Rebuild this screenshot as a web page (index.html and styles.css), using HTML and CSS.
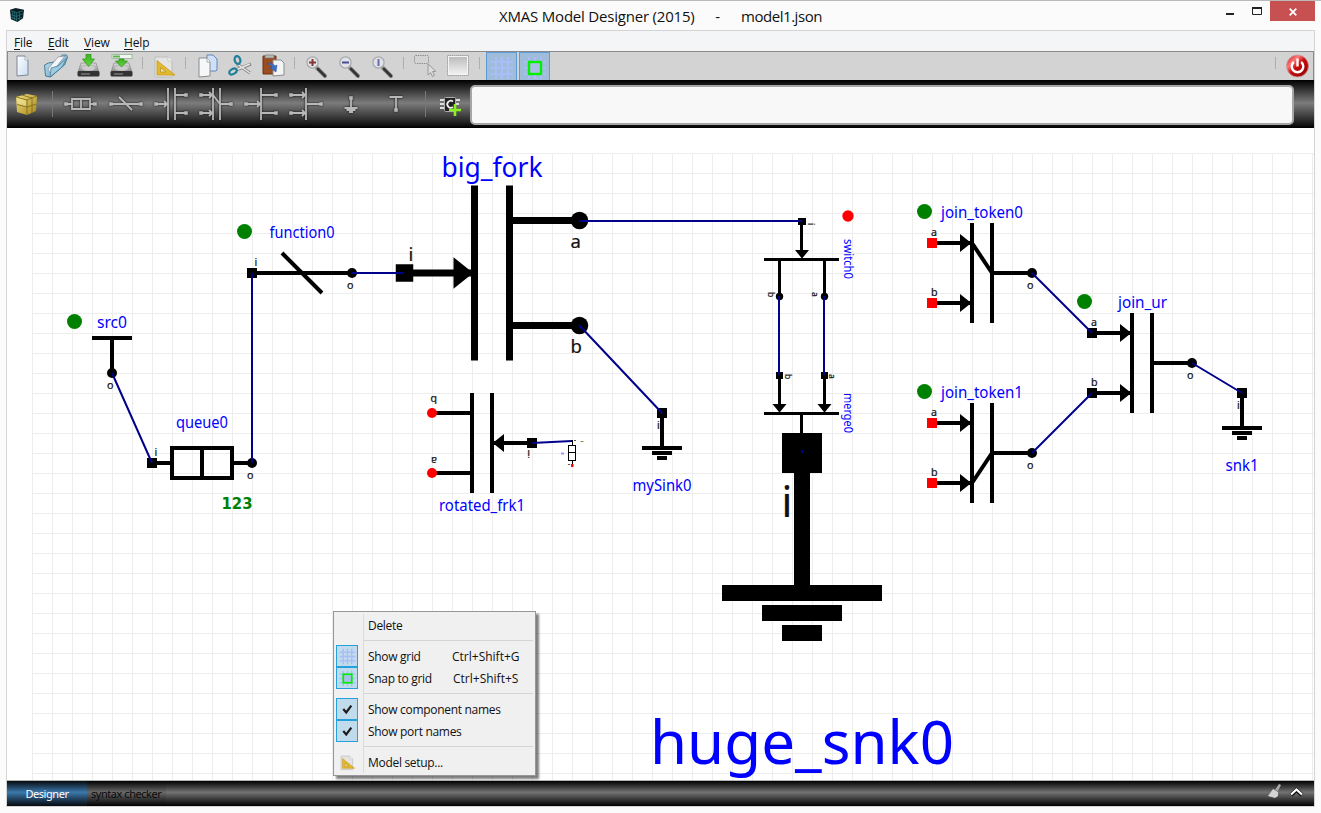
FILE: index.html
```html
<!DOCTYPE html>
<html lang="en">
<head>
<meta charset="utf-8">
<title>XMAS Model Designer (2015) - model1.json</title>
<link rel="stylesheet" href="styles.css">
</head>
<body>
<svg class="defs" width="0" height="0" aria-hidden="true">
  <defs>
    <linearGradient id="page" x1="0" y1="0" x2="1" y2="1"><stop offset="0" stop-color="#fff"/><stop offset="1" stop-color="#c9dcf3"/></linearGradient>
    <linearGradient id="folder" x1="0" y1="0" x2="1" y2="1"><stop offset="0" stop-color="#c8e4f0"/><stop offset="1" stop-color="#5f9fbe"/></linearGradient>
    <linearGradient id="disk" x1="0" y1="0" x2="0" y2="1"><stop offset="0" stop-color="#ddd"/><stop offset="1" stop-color="#888"/></linearGradient>
    <linearGradient id="arrowg" x1="0" y1="0" x2="0" y2="1"><stop offset="0" stop-color="#3cb521"/><stop offset="1" stop-color="#5ed63a"/></linearGradient>
    <linearGradient id="gold" x1="0" y1="0" x2="1" y2="1"><stop offset="0" stop-color="#f0e080"/><stop offset="1" stop-color="#a5851a"/></linearGradient>
    <linearGradient id="fade" x1="0" y1="0" x2="0" y2="1"><stop offset="0" stop-color="#bbb"/><stop offset="1" stop-color="#f2f2f2"/></linearGradient>
    <linearGradient id="red" x1="0" y1="0" x2="1" y2="1"><stop offset="0" stop-color="#b81010"/><stop offset=".3" stop-color="#ff7a7a"/><stop offset=".5" stop-color="#c80c0c"/><stop offset=".8" stop-color="#a00606"/><stop offset="1" stop-color="#f05050"/></linearGradient>
    <symbol id="setup" viewBox="0 0 25 25">
      <path d="M3 3h13l4 4v16H3z" fill="#e4e4e2" stroke="#bdbdbd"/><path d="M16 3v4h4" fill="#fff" stroke="#c6c6c6"/>
      <path d="M5 6.500v14.500h18z" fill="#e3b92f" stroke="#c79a1f" stroke-width=".8"/><path d="M8.500 13.500v4.500h5.500z" fill="#e9e4cf" stroke="#b98f1d" stroke-width=".8"/>
    </symbol>
    <symbol id="grid" viewBox="0 0 24 24"><path d="M6 1v22M12 1v22M18 1v22M1 6h22M1 12h22M1 18h22" stroke="#a9bdf6" stroke-width="2"/></symbol>
    <symbol id="snap" viewBox="0 0 24 24"><use href="#grid"/><rect x="6" y="6" width="12" height="12" fill="#a9bfe8" stroke="#00f000" stroke-width="2.400"/></symbol>
    <symbol id="lens" viewBox="0 0 25 25"><path d="M13 14l8 8" stroke="#8e8e8e" stroke-width="4" stroke-linecap="round"/><path d="M14 15l7 7" stroke="#353535" stroke-width="2.600" stroke-linecap="round"/><circle cx="8.500" cy="8.500" r="5.600" fill="#dfe2e6" stroke="#a9a9a9" stroke-width="1.300"/></symbol>
    <symbol id="check" viewBox="0 0 20 20"><path d="M5 9.500l3.500 4 6-8" fill="none" stroke="#1c1c1c" stroke-width="2.600"/></symbol>
    <g id="arrow"><path d="M-10-9L0-1V1L-10 9z"/></g>
    <g id="join-base"><path class="ln" d="M-10-50V50M10-50V50M10 0H50M-50-30H-12M-50 30H-12"/><use href="#arrow" x="-12" y="-30"/><use href="#arrow" x="-12" y="30"/><circle cx="50" r="5"/></g>
    <g id="fork-base"><path class="ln" d="M-10-50V50M10-50V50M-50 0H-12M10-30H50M10 30H50"/><use href="#arrow" x="-12"/><path d="M-55-5h10v10h-10z"/></g>
    <g id="sink"><path class="ln" d="M0-20V15M-20 15H20M-10 20H10M-5 25H5"/><path d="M-5-25h10v10h-10z"/></g>
  </defs>
</svg>

<header class="titlebar">
  <svg class="app-icon" viewBox="0 0 15 15"><path d="M0 2L6 0l9 2-1 9-6 4-7-3z" fill="#0b2025"/><path d="M1 3l6 2 7-2M7 5v9M1 7l6 2 7-3M3 3v9M5 4v9M10 4v9M1 10l6 2 6-2" stroke="#2b7c86" stroke-width=".7" fill="none"/></svg>
  <h1 class="title"><span class="t-app">XMAS Model Designer (2015)</span><span>-</span><span class="t-doc">model1.json</span></h1>
  <div class="winbtns">
    <svg class="minmax" viewBox="0 0 45 20"><path d="M1 13h8" stroke="#222" stroke-width="2"/><path d="M27.500 7.500h9v6h-9z" fill="none" stroke="#222" stroke-width="1"/><path d="M27 7h10" stroke="#222" stroke-width="2"/></svg>
    <div class="close"><svg viewBox="0 0 8 8"><path d="M.7.7l6.600 6.600M7.300.7L.7 7.300" stroke="#fff" stroke-width="1.700"/></svg></div>
  </div>
</header>

<main class="window">
  <nav class="menubar"><span class="m-file"><u>F</u>ile</span><span class="m-edit"><u>E</u>dit</span><span class="m-view"><u>V</u>iew</span><span><u>H</u>elp</span></nav>

  <div class="toolbar">
    <div class="tools">
      <span class="slot"><svg viewBox="0 0 25 25"><path d="M7 2h8l3 4v15l-11 1z" fill="url(#page)" stroke="#7d8795"/><path d="M15 2v4h3" fill="#fff" stroke="#98a1ad" stroke-width=".8"/></svg></span>
      <span class="slot"><svg viewBox="0 0 25 25"><path d="M1.500 11l4-2 6-1 8-7 4 0 1 2-3 8-14 12-5-1z" fill="url(#folder)" stroke="#477d99"/><path d="M5 15L15 3l7-1-8 10-7 7z" fill="#f4f7f9" stroke="#889" stroke-width=".7"/><path d="M8 14l7-2 9-8-5 9-12 10z" fill="#9ccce2" stroke="#48809d" stroke-width=".8"/></svg></span>
      <span class="slot"><svg viewBox="0 0 25 25"><path d="M5 9h15l3 9H2z" fill="url(#disk)" stroke="#888" stroke-width=".7"/><ellipse cx="12.500" cy="14" rx="7" ry="3" fill="#ccc" stroke="#aaa" stroke-width=".6"/><rect x="1.500" y="17" width="22" height="5.500" rx="1.500" fill="#333"/><path d="M5 20h9" stroke="#777" stroke-width="1.500"/><path d="M10 0h5v5h3.500l-6 7.500L6.500 5h3.500z" fill="url(#arrowg)" stroke="#31901d" stroke-width=".7"/></svg></span>
      <span class="slot"><svg viewBox="0 0 25 25"><path d="M5 9h15l3 9H2z" fill="url(#disk)" stroke="#888" stroke-width=".7"/><ellipse cx="12.500" cy="14" rx="7" ry="3" fill="#ccc" stroke="#aaa" stroke-width=".6"/><rect x="1.500" y="17" width="22" height="5.500" rx="1.500" fill="#333"/><path d="M5 20h9" stroke="#777" stroke-width="1.500"/><rect x="3" y=".5" width="20" height="4" fill="#f4f4f4" stroke="#8bb98b" stroke-width=".8"/><path d="M4 2.500h7" stroke="#5fb14c" stroke-width="2"/><path d="M10 5h5v2h3.500l-6 6L6.500 7h3.500z" fill="url(#arrowg)" stroke="#31901d" stroke-width=".7"/></svg></span>
      <i class="sep"></i>
      <span class="slot"><svg viewBox="0 0 25 25"><use href="#setup"/></svg></span>
      <i class="sep"></i>
      <span class="slot"><svg viewBox="0 0 25 25"><path d="M12 1h6l4 4v11l-1 1h-9z" fill="#cfe0f6" stroke="#5e86bd"/><path d="M4 4h8l3 4v14l-11 1z" fill="#f5f7f9" stroke="#8b8b8b"/><path d="M12 4v4h3" fill="#fff" stroke="#999" stroke-width=".8"/></svg></span>
      <span class="slot"><svg viewBox="0 0 25 25"><path d="M9 10l13 9M8 16L23 10" stroke="#888" stroke-width="3"/><path d="M9 10l13 9M9 15.500l13-5.500" stroke="#e6e6e6" stroke-width="1.500"/><ellipse cx="9.500" cy="6" rx="2.800" ry="4" fill="none" stroke="#1f7f99" stroke-width="2.200" transform="rotate(-15 9.500 6)"/><ellipse cx="5" cy="17.500" rx="2.500" ry="4" fill="none" stroke="#1f7f99" stroke-width="2.200" transform="rotate(60 5 17.500)"/></svg></span>
      <span class="slot"><svg viewBox="0 0 25 25"><path d="M2 2h13v18H2z" fill="#9a4d20" stroke="#6c330f"/><path d="M4 1h9v3H4z" fill="#bbb" stroke="#777" stroke-width=".7"/><path d="M12 6h8l3 3v12l-11 1z" fill="#f2f4f6" stroke="#8b8b8b"/><path d="M6 10c3-2 7 0 8 2l2-1-1 7-6-4 2-1c-1-2-3-3-5-3z" fill="#3d6fc4" stroke="#2b4f94" stroke-width=".5"/></svg></span>
      <i class="sep"></i>
      <span class="slot"><svg viewBox="0 0 25 25"><use href="#lens"/><path d="M5 8.500h7M8.500 5v7" stroke="#8a3434" stroke-width="2"/></svg></span>
      <span class="slot"><svg viewBox="0 0 25 25"><use href="#lens"/><path d="M5 8.500h7" stroke="#4b4b93" stroke-width="2"/></svg></span>
      <span class="slot"><svg viewBox="0 0 25 25"><use href="#lens"/><path d="M8.500 5v7" stroke="#6c6ca8" stroke-width="2"/></svg></span>
      <i class="sep"></i>
      <span class="slot"><svg viewBox="0 0 25 25"><rect x="1.500" y="1.500" width="14" height="8" rx="1" fill="none" stroke="#8f8f8f" stroke-dasharray="1.500 .8"/><path d="M15 10v11l2.500-2.500 2 4 2-1-2-4h3.500z" fill="#ddd" stroke="#999"/></svg></span>
      <span class="slot"><svg viewBox="0 0 25 25"><rect x="2.500" y="2.500" width="19" height="18" fill="url(#fade)" stroke="#f4f4f4"/><rect x="1.500" y="1.500" width="21" height="20" fill="none" stroke="#a2a2a2" stroke-dasharray="1.500 .6"/></svg></span>
      <i class="sep"></i>
      <span class="slot toggle"><svg viewBox="0 0 24 24"><use href="#grid"/></svg></span>
      <span class="slot toggle second"><svg viewBox="0 0 24 24"><use href="#snap"/></svg></span>
    </div>
    <div class="tools right"><i class="sep"></i><span class="slot"><svg viewBox="0 0 25 25"><circle cx="12.500" cy="12" r="11" fill="url(#red)" stroke="#c99" stroke-width=".8"/><path d="M8.800 8a5.800 5.800 0 1 0 7.400 0M12.500 4.500v8" fill="none" stroke="#fff" stroke-width="2.400"/></svg></span></div>
  </div>

  <div class="compbar">
    <span class="group"><svg viewBox="0 0 40 48"><path d="M9 17l11-3 10 2-1 15-9 4-10-3z" fill="url(#gold)"/><path d="M9 17l11 3 10-4M20 20v15M10 24.500l10 2.500 9.500-3M15 15l10 3v15" stroke="#7d6516" stroke-width=".8" fill="none"/><path d="M10 18l9 2.500v5.500L10.500 23.500z" fill="#f6ebac" opacity=".5"/></svg></span>
    <i class="dsep d1"></i>
    <svg class="comp" viewBox="0 0 45 48"><path d="M8 24h6M32 24h5M14 19h18v10H14zM23 19v10"/><path class="pt" d="M8 24h0M37 24h0"/></svg>
    <svg class="comp" viewBox="0 0 45 48"><path d="M8 24h30M16 17l13 13"/><path class="pt" d="M8 24h0M38 24h0"/></svg>
    <svg class="comp" viewBox="0 0 45 48"><path d="M20 8v32M27 8v32M8 24h10M16 21l3 3-3 3M27 15h11M27 33h11"/><path class="pt" d="M8 24h0M38 15h0M38 33h0"/></svg>
    <svg class="comp" viewBox="0 0 45 48"><path d="M20 8v32M27 8v32M8 15h10M8 33h10M16 12l3 3-3 3M16 30l3 3-3 3M20 15l7 9h11"/><path class="pt" d="M8 15h0M8 33h0M38 24h0"/></svg>
    <svg class="comp" viewBox="0 0 45 48"><path d="M23 8v32M8 24h13M19 21l3 3-3 3M23 15h15M23 33h15"/><path class="pt" d="M8 24h0M38 15h0M38 33h0"/></svg>
    <svg class="comp" viewBox="0 0 45 48"><path d="M23 8v32M8 15h13M8 33h13M19 12l3 3-3 3M19 30l3 3-3 3M23 24h15"/><path class="pt" d="M8 15h0M8 33h0M38 24h0"/></svg>
    <svg class="comp" viewBox="0 0 45 48"><path d="M23 18v10M16.500 28h13M18.500 30h9M21 32h4"/><path class="pt" d="M23 18h0"/></svg>
    <svg class="comp" viewBox="0 0 45 48"><path d="M16.500 17h13M23 17v13"/><path class="pt" d="M23 30h0"/></svg>
    <i class="dsep d2"></i>
    <span class="chip"><svg viewBox="0 0 37 48"><rect x="11.500" y="17.500" width="11" height="14" rx="1" fill="#222" stroke="#aaa"/><path d="M7 20h4M7 24h4M7 28h4M23 20h4M23 24h3" stroke="#ddd" stroke-width="2"/><path d="M20 21.500a3.500 3.500 0 1 0 0 5.500" fill="none" stroke="#eee" stroke-width="1.800"/><path d="M16 30h12M22 24v12" stroke="#8df020" stroke-width="2.600"/></svg></span>
    <div class="field"></div>
  </div>

  <section class="canvas">
    <svg class="diagram" viewBox="7 128 1307 652">
      <defs><pattern id="gridlines" x="32" y="153" width="20" height="20" patternUnits="userSpaceOnUse"><path d="M0 .5H20M.5 0V20" stroke="#ededed"/></pattern></defs>
      <rect x="32" y="153" width="1282" height="627" fill="url(#gridlines)"/>

      <g class="ok"><circle cx="74.500" cy="321.500" r="7.500"/><circle cx="244.500" cy="231.500" r="7.500"/><circle cx="924.500" cy="211.500" r="7.500"/><circle cx="1084.500" cy="301.500" r="7.500"/><circle cx="924.500" cy="391.500" r="7.500"/></g>
      <circle class="bad" cx="848" cy="216" r="5.700"/>

      <path class="ln" d="M92 338h40M112 338v35"/><circle cx="112" cy="373" r="5"/>
      <path class="ln" d="M152 463h20M232 463h20M172 448h60v30h-60zM202 448v30"/><path d="M147 458h10v10h-10z"/><circle cx="252" cy="463" r="5"/>
      <path class="ln" d="M252 273h100M282 253l40 40"/><path d="M247 268h10v10h-10z"/><circle cx="352" cy="273" r="5"/>

      <g transform="translate(492 273) scale(1.75)"><use href="#fork-base"/><circle cx="50" cy="-30" r="5"/><circle cx="50" cy="30" r="5"/></g>
      <g transform="translate(482 443) rotate(180)"><use href="#fork-base"/><circle class="bad" cx="50" cy="-30" r="5"/><circle class="bad" cx="50" cy="30" r="5"/></g>
      <g transform="translate(662 433)"><use href="#sink"/></g>
      <g transform="translate(1242 413)"><use href="#sink"/></g>
      <g transform="translate(802 533) scale(4)"><use href="#sink"/></g>

      <g class="thin"><path d="M801.500 222v34M764 259.500h75M779.500 260v36M824.500 260v36M779.500 376v30M824.500 376v30M764 413.500h75M801.500 413v21"/></g>
      <path d="M798 218h8v7h-8zM795 250h14l-6.500 8h-1zM776 372h7v7h-7zM821 372h7v7h-7zM772.500 404h14l-6.500 8h-1zM817.500 404h14l-6.500 8h-1z"/>
      <circle cx="779.500" cy="296.500" r="3.700"/><circle cx="824.500" cy="296.500" r="3.700"/>

      <g transform="translate(982 273)"><use href="#join-base"/><path class="ln" d="M-10-30L10 0"/><path class="bad" d="M-55-35h10v10h-10zM-55 25h10v10h-10z"/></g>
      <g transform="translate(982 453)"><use href="#join-base"/><path class="ln" d="M-10 30L10 0"/><path class="bad" d="M-55-35h10v10h-10zM-55 25h10v10h-10z"/></g>
      <g transform="translate(1142 363)"><use href="#join-base"/><path d="M-55-35h10v10h-10zM-55 25h10v10h-10z"/></g>

      <g class="tiny"><path d="M572.500 441v4M572.500 461v4"/><rect x="568.500" y="445.500" width="7" height="15" fill="#fff"/><path d="M568 452.500h8"/></g>
      <path class="bad" d="M571 464h2.500v3H571z"/><path d="M571 440h2v2h-2z"/>
      <path d="M574 440.500h2M568 464.500h2" stroke="#654" fill="none"/><path d="M580.500 441.500h3" stroke="#8a8a30" fill="none"/><path d="M561 453.500h3" stroke="#99f" stroke-width="2" fill="none"/>

      <path class="wire" d="M112 373L152 463M252 463V273M352 273H404M579 221H802M579 325L662 413M779 296V375M824 296V375M532 443L572 441M1032 273L1092 333M1032 453L1092 393M1192 363L1242 393M802 450v3"/>

      <g class="name">
        <text x="97" y="328" textLength="30" lengthAdjust="spacingAndGlyphs">src0</text><text x="176" y="428" textLength="52" lengthAdjust="spacingAndGlyphs">queue0</text>
        <text x="269.500" y="238" textLength="65" lengthAdjust="spacingAndGlyphs">function0</text><text x="439" y="511" textLength="86" lengthAdjust="spacingAndGlyphs">rotated_frk1</text>
        <text x="632.500" y="491" textLength="59" lengthAdjust="spacingAndGlyphs">mySink0</text><text x="941" y="218" textLength="82" lengthAdjust="spacingAndGlyphs">join_token0</text>
        <text x="941" y="398" textLength="82" lengthAdjust="spacingAndGlyphs">join_token1</text><text x="1118" y="308" textLength="49" lengthAdjust="spacingAndGlyphs">join_ur</text>
        <text x="1225.500" y="471" textLength="33" lengthAdjust="spacingAndGlyphs">snk1</text>
        <text class="big" x="441.500" y="176.500" textLength="101" lengthAdjust="spacingAndGlyphs">big_fork</text>
        <text class="huge" x="650" y="764" textLength="304" lengthAdjust="spacingAndGlyphs">huge_snk0</text>
        <text class="small" transform="translate(843.500 239) rotate(90)" textLength="40" lengthAdjust="spacingAndGlyphs">switch0</text>
        <text class="small" transform="translate(843.500 393) rotate(90)" textLength="40" lengthAdjust="spacingAndGlyphs">merge0</text>
      </g>
      <text class="count" x="221.500" y="509" textLength="31" lengthAdjust="spacingAndGlyphs">123</text>
      <g class="port">
        <text x="107" y="389">o</text><text x="154.500" y="456">i</text><text x="247" y="479">o</text><text x="254.500" y="266">i</text><text x="347" y="289">o</text>
        <text x="657" y="428.500">i</text><text x="1237" y="409">i</text>
        <text x="931" y="236">a</text><text x="931" y="296">b</text><text x="1027" y="289">o</text>
        <text x="931" y="416">a</text><text x="931" y="476">b</text><text x="1027" y="469">o</text>
        <text x="1091" y="326">a</text><text x="1091" y="386">b</text><text x="1187" y="379">o</text>
        <text transform="translate(437 396) rotate(180)">b</text><text transform="translate(437 457) rotate(180)">a</text><text transform="translate(530 450) rotate(180)">i</text>
        <g class="p-small"><text transform="translate(767.500 292) rotate(90)">b</text><text transform="translate(812 292) rotate(90)">a</text><text transform="translate(784.500 374) rotate(90)">b</text><text transform="translate(829 374) rotate(90)">a</text><text transform="translate(808 223) rotate(90)">i</text></g>
        <g class="p-big"><text x="408.500" y="260.500">i</text><text x="570.500" y="248">a</text><text x="570.500" y="353">b</text></g>
        <text class="p-huge" x="781.500" y="517">i</text>
      </g>
    </svg>

    <div class="menu">
      <div class="row"><span class="label">Delete</span></div>
      <hr>
      <div class="row"><span class="box"><svg viewBox="0 0 24 24"><use href="#grid"/></svg></span><span class="label">Show grid</span><span class="key">Ctrl+Shift+G</span></div>
      <div class="row"><span class="box"><svg viewBox="0 0 24 24"><use href="#snap"/></svg></span><span class="label">Snap to grid</span><span class="key last">Ctrl+Shift+S</span></div>
      <hr>
      <div class="row"><span class="box"><svg viewBox="0 0 20 20"><use href="#check"/></svg></span><span class="label">Show component names</span></div>
      <div class="row"><span class="box"><svg viewBox="0 0 20 20"><use href="#check"/></svg></span><span class="label">Show port names</span></div>
      <hr>
      <div class="row"><span class="box plain"><svg viewBox="0 0 25 25"><use href="#setup"/></svg></span><span class="label">Model setup...</span></div>
    </div>
  </section>

  <footer class="statusbar">
    <span class="tab active">Designer</span><span class="tab idle">syntax checker</span>
    <svg class="status-icons" viewBox="0 0 50 26"><path d="M15 4l2 1-3 6-3-1z" fill="#aaa"/><path d="M9 9l5 3 0 4-3 2-7-2z" fill="#d4d4d4"/><path d="M27 15l5.500-5 5.500 5" stroke="#111" stroke-width="4" fill="none"/><path d="M27 14.500l5.500-5 5.500 5" stroke="#fff" stroke-width="2.200" fill="none"/></svg>
  </footer>
</main>
</body>
</html>
```
FILE: styles.css
```css
* { box-sizing: border-box; }
body { margin: 0; width: 1321px; height: 813px; overflow: hidden; background: #fbfbfb; border-top: 1px solid #b9b9b9; font-family: "Open Sans", "Noto Sans", sans-serif; color: #111; }
.defs { position: absolute; }
svg { display: block; }

.titlebar { display: flex; align-items: flex-start; height: 29px; padding: 0 2px 0 10px; }
.app-icon { width: 14px; height: 14px; margin-top: 7px; }
.title { display: flex; width: 323px; justify-content: space-between; margin: 5px 0 0 475px; font-size: 15px; font-weight: 400; line-height: 20px; white-space: nowrap; }
.t-app { letter-spacing: -.2px; }
.t-doc { letter-spacing: -.45px; }
.winbtns { display: flex; margin-left: auto; margin-right: 1px; }
.minmax { width: 45px; height: 20px; }
.close { display: flex; align-items: center; justify-content: center; width: 45px; height: 20px; margin-right: 3px; background: #c75050; }
.close svg { width: 8px; height: 8px; margin-top: 2px; }

.window { display: flex; flex-direction: column; width: 1309px; height: 777px; margin-left: 6px; border: 1px solid #d4d4d4; }
.menubar { display: flex; height: 20px; padding-left: 7px; background: #f4f5f7; font-size: 12px; line-height: 23px; letter-spacing: -.15px; }
.menubar u { text-underline-offset: 2px; }
.m-file { width: 34px; }
.m-edit { width: 36px; }
.m-view { width: 40px; }

.toolbar { display: flex; justify-content: space-between; height: 29px; background: #d3d3d3; border: 1px solid #8a8a8a; border-width: 1px 1px 0; }
.tools { display: flex; margin-left: -2px; }
.tools.right { margin-right: -1px; }
.slot { display: flex; align-items: center; justify-content: center; width: 33px; height: 28px; }
.slot svg { width: 25px; height: 25px; margin-left: -1px; }
.sep { width: 10px; height: 12px; margin-top: 5px; background: linear-gradient(#aeaeae, #aeaeae) 4px 0 / 1px 100% no-repeat; }
.toggle { width: 31px; margin-left: 1px; background: #9fbcdb; border: 1px solid #5b9bd8; border-width: 1px 1px 0; }
.toggle.second { margin-left: 2px; }
.toggle svg { width: 24px; height: 24px; margin: 2px 0 0; }

.compbar { display: flex; align-items: center; height: 48px; background: linear-gradient(#000, #1a1a1a 10%, #7c7c7c 48%, #1c1c1c 90%, #000); }
.group { width: 40px; height: 48px; }
.group svg { width: 40px; height: 48px; }
.dsep { width: 11px; height: 26px; background: linear-gradient(#777, #777) 5px 0 / 1px 100% no-repeat; }
.d2 { width: 15px; background-position: 7px 0; }
.comp { width: 45px; height: 48px; fill: none; stroke: #b8b8b8; stroke-width: 1.8; filter: drop-shadow(0 0 1px #111); }
.comp .pt { stroke-width: 3.6; stroke-linecap: square; }
.chip { width: 37px; height: 48px; }
.field { width: 824px; height: 40px; margin-top: 2px; background: #f8f8f8; border: 2px solid #a6a6a6; border-radius: 5px; }

.canvas { position: relative; height: 652px; background: #fff; }
.diagram { width: 1307px; height: 652px; }
.ln { fill: none; stroke: #000; stroke-width: 4; }
.thin { fill: none; stroke: #000; stroke-width: 3; }
.tiny { fill: none; stroke: #000; stroke-width: 1; }
.wire { fill: none; stroke: #00008b; stroke-width: 2; }
.ok { fill: #008000; }
.bad { fill: #f00; }
.name { fill: #00f; font: 15.5px "Noto Sans", sans-serif; }
.big { font-size: 27px; }
.huge { font-size: 60px; }
.small { font-size: 12px; }
.count { fill: #008000; font: bold 15px "DejaVu Sans", sans-serif; }
.port { fill: #111; stroke: #111; stroke-width: .2; font: 10.7px "Noto Sans", sans-serif; }
.p-small { font-size: 8.500px; }
.p-big { font-size: 18.5px; }
.p-huge { font-size: 42px; }

.menu { position: absolute; left: 326px; top: 483px; width: 203px; height: 165px; padding: 2px; border: 1px solid #979797; background: linear-gradient(#dcdcdc, #dcdcdc) 29px 2px / 1px 159px no-repeat #f0f0f0; box-shadow: 3px 3px 2px rgba(0, 0, 0, .5); font-size: 12px; letter-spacing: -.3px; }
.row { display: flex; align-items: center; height: 22px; }
.row .label { width: 84px; line-height: 22px; padding-top: 2px; white-space: nowrap; }
.row .label:first-child { margin-left: 32px; }
.key { padding-top: 1px; letter-spacing: 0; }
.key.last { margin-left: 1px; }
.box { display: flex; align-items: center; justify-content: center; width: 22px; height: 22px; margin-right: 10px; background: #c0dcec; border: 1px solid #26a0da; }
.box svg { width: 17px; height: 17px; }
.box.plain { background: none; border-color: transparent; }
.menu hr { height: 9px; margin: 0 0 0 28px; border: 0; background: linear-gradient(#d4d4d4, #d4d4d4) 0 4px / 100% 1px no-repeat; }

.statusbar { display: flex; align-items: stretch; height: 26px; border-top: 1px solid #b4b8b4; background: linear-gradient(#000, #737373 45%, #000); font-size: 11px; line-height: 25px; }
.tab { font-family: "Noto Sans", sans-serif; letter-spacing: -.45px; }
.tab.active { width: 80px; text-align: center; color: #fff; background: linear-gradient(#05090d, #3c78ac 45%, #05090d); }
.tab.idle { width: 79px; padding-left: 4px; color: #0a0a0a; background: linear-gradient(#000, #6a6a6a 45%, #000); white-space: nowrap; }
.status-icons { width: 50px; height: 26px; margin: -1px 0 0 auto; }
```
